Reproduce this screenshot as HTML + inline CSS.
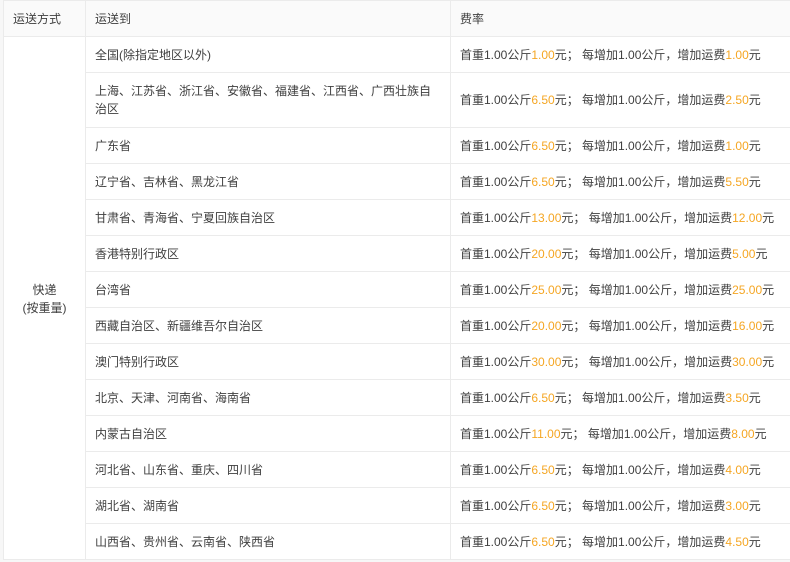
<!DOCTYPE html>
<html><head><meta charset="utf-8"><style>
body{margin:0;width:790px;height:562px;background:#f7f7f7;overflow:hidden;font-family:"Liberation Sans","Noto Sans CJK SC",sans-serif;font-size:12px;color:#404040}
table{position:absolute;left:3px;top:0;border-collapse:collapse;background:#fff;table-layout:fixed;width:800px}
td,th{border:1px solid #ebebeb;padding:0 0 0 9px;text-align:left;font-weight:normal;line-height:18px}
th{background:#fafafa;height:35px}
td{height:35px}
.c{text-align:center;padding:0}
.o{color:#f5a623}
</style></head><body>
<table>
<colgroup><col style="width:82px"><col style="width:365px"><col style="width:353px"></colgroup>
<tr><th>运送方式</th><th>运送到</th><th>费率</th></tr>
<tr><td class="c" rowspan="14" style="padding-top:2px">快递<br>(按重量)</td><td>全国(除指定地区以外)</td><td>首重1.00公斤<span class="o">1.00</span>元； 每增加1.00公斤，增加运费<span class="o">1.00</span>元</td></tr>
<tr><td style="height:54px">上海、江苏省、浙江省、安徽省、福建省、江西省、广西壮族自<br>治区</td><td>首重1.00公斤<span class="o">6.50</span>元； 每增加1.00公斤，增加运费<span class="o">2.50</span>元</td></tr>
<tr><td>广东省</td><td>首重1.00公斤<span class="o">6.50</span>元； 每增加1.00公斤，增加运费<span class="o">1.00</span>元</td></tr>
<tr><td>辽宁省、吉林省、黑龙江省</td><td>首重1.00公斤<span class="o">6.50</span>元； 每增加1.00公斤，增加运费<span class="o">5.50</span>元</td></tr>
<tr><td>甘肃省、青海省、宁夏回族自治区</td><td>首重1.00公斤<span class="o">13.00</span>元； 每增加1.00公斤，增加运费<span class="o">12.00</span>元</td></tr>
<tr><td>香港特别行政区</td><td>首重1.00公斤<span class="o">20.00</span>元； 每增加1.00公斤，增加运费<span class="o">5.00</span>元</td></tr>
<tr><td>台湾省</td><td>首重1.00公斤<span class="o">25.00</span>元； 每增加1.00公斤，增加运费<span class="o">25.00</span>元</td></tr>
<tr><td>西藏自治区、新疆维吾尔自治区</td><td>首重1.00公斤<span class="o">20.00</span>元； 每增加1.00公斤，增加运费<span class="o">16.00</span>元</td></tr>
<tr><td>澳门特别行政区</td><td>首重1.00公斤<span class="o">30.00</span>元； 每增加1.00公斤，增加运费<span class="o">30.00</span>元</td></tr>
<tr><td>北京、天津、河南省、海南省</td><td>首重1.00公斤<span class="o">6.50</span>元； 每增加1.00公斤，增加运费<span class="o">3.50</span>元</td></tr>
<tr><td>内蒙古自治区</td><td>首重1.00公斤<span class="o">11.00</span>元； 每增加1.00公斤，增加运费<span class="o">8.00</span>元</td></tr>
<tr><td>河北省、山东省、重庆、四川省</td><td>首重1.00公斤<span class="o">6.50</span>元； 每增加1.00公斤，增加运费<span class="o">4.00</span>元</td></tr>
<tr><td>湖北省、湖南省</td><td>首重1.00公斤<span class="o">6.50</span>元； 每增加1.00公斤，增加运费<span class="o">3.00</span>元</td></tr>
<tr><td>山西省、贵州省、云南省、陕西省</td><td>首重1.00公斤<span class="o">6.50</span>元； 每增加1.00公斤，增加运费<span class="o">4.50</span>元</td></tr>
</table>
</body></html>
